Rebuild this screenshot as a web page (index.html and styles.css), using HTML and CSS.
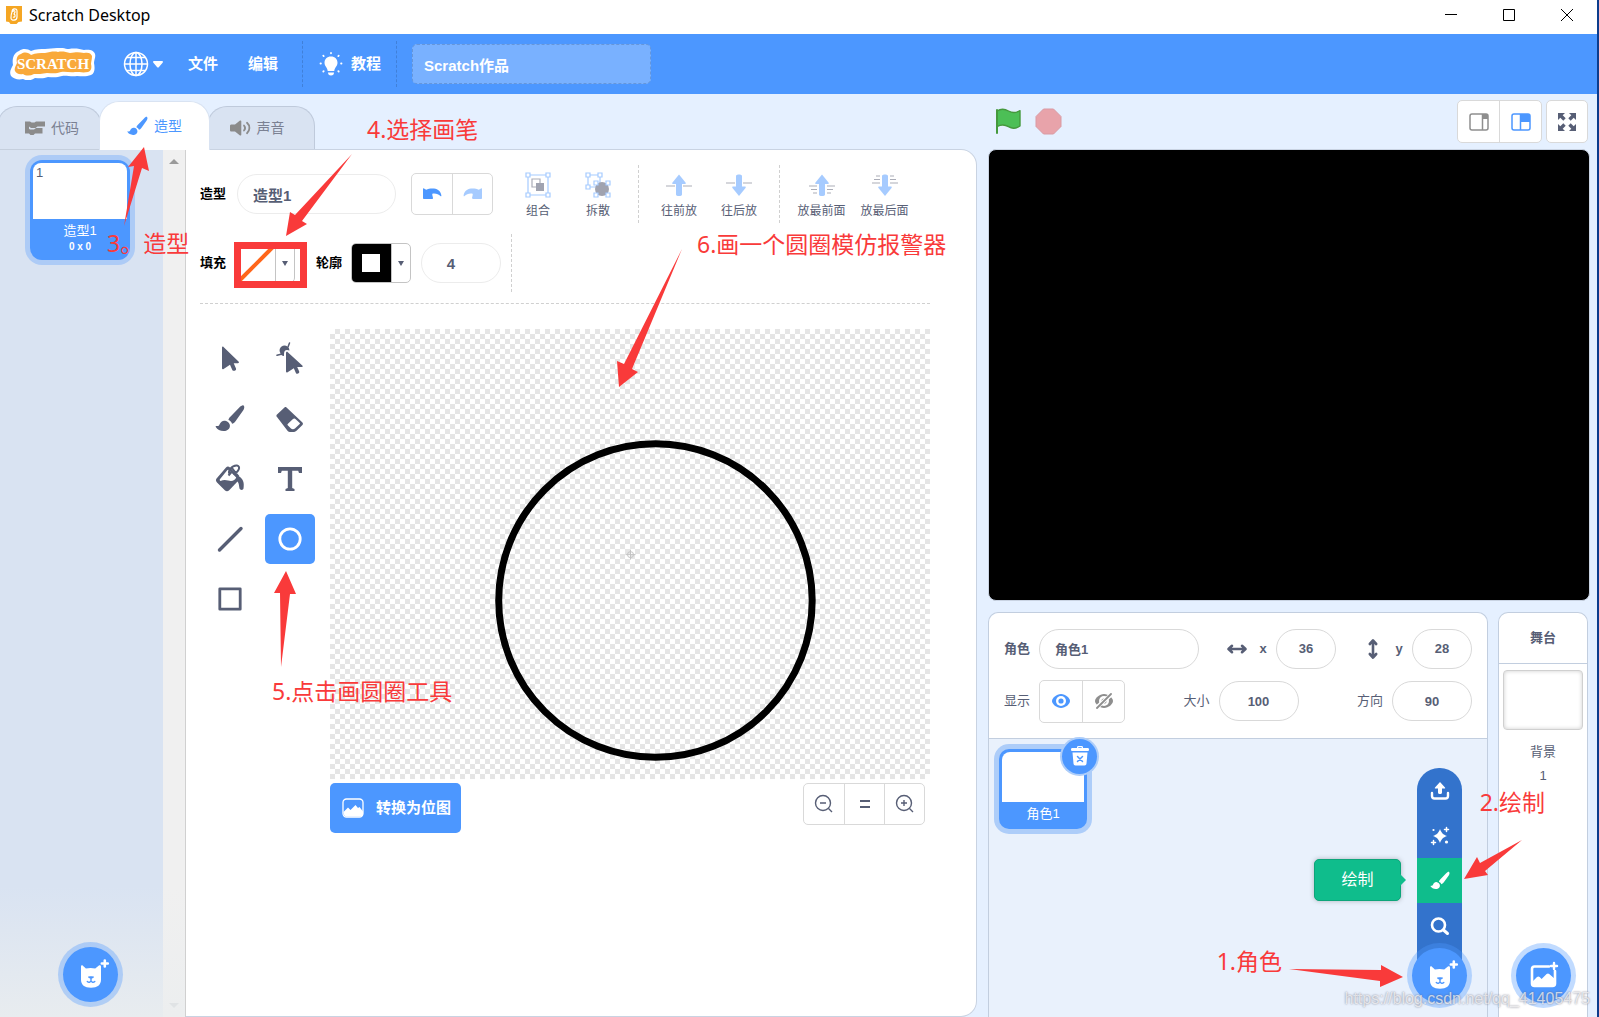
FILE: index.html
```html
<!DOCTYPE html>
<html lang="zh-CN">
<head>
<meta charset="utf-8">
<title>Scratch Desktop</title>
<link rel="stylesheet" href="styles.css">
</head>
<body>
<svg class="sprites" aria-hidden="true">
  <symbol id="brush" viewBox="0 0 30 30">
    <path d="M28.600 1.400c1.200 1 .7 3.200-.5 5.200L20.500 17.300c-1 1.400-2.300 2.200-3.400 2.500-.6-1.800-1.900-3.100-3.700-3.700.2-1.200.9-2.500 2.200-3.600L24.300 3.400c1.600-1.500 3.300-2.700 4.300-2z"/>
    <path d="M14.600 20.200c1.300 3.600-1.500 6.800-6 6.800-3.400 0-6.400-1.600-7.800-4-.4-.7.100-1.200.9-1 1.400.3 2.300-.1 2.800-1.400 1.200-3.200 3.500-4.300 5.800-3.800 2 .4 3.600 1.600 4.300 3.400z"/>
  </symbol>
  <symbol id="cat" viewBox="0 0 44 44">
    <path fill="#fff" d="M12 13.500c0-1.200 1.200-1.500 1.900-.8l3 2.900c3.200-.7 6.200-.7 9.300 0l3.700-3.100c.9-.7 2.100-.2 2.100 1v13.200c0 5-3.500 8-10 8s-10-3-10-8z"/>
    <path fill="#4c97ff" d="M19 23.800c0-.4 1.300-.6 3-.6s3 .2 3 .6c0 .8-1.600 2-3 2s-3-1.200-3-2z"/>
    <path fill="none" stroke="#4c97ff" stroke-width="1.400" stroke-linecap="round" d="M22 25.500v2.500M18.300 28.500c1.500 1.300 3 .8 3.700-.5.7 1.300 2.300 1.800 3.800.5"/>
    <path stroke="#fff" stroke-width="2.600" stroke-linecap="round" d="M35.800 7.500v6M32.800 10.500h6"/>
  </symbol>
</svg>

<div class="app">
  <header class="titlebar">
    <svg class="app-icon" width="18" height="19" viewBox="0 0 18 19"><path fill="#f5a623" d="M1 0h16v15.500l-3.500.5L11.500 18h-6L4 16l-3-.5z"/><path fill="none" stroke="#fff" stroke-width="1.200" d="M7 6c0-4 5-4 5-1v6c0 4-6 4-6 1 0-2 0-4 1-6zM8 6c0-2 2-2 2 0l-1 2c2 1 1 4-1 3"/></svg>
    <h1 class="title">Scratch Desktop</h1>
    <div class="window-buttons">
      <button aria-label="最小化"><svg width="12" height="12"><path d="M0 5.500h12"/></svg></button>
      <button aria-label="最大化"><svg width="12" height="12"><path d="M.5.5h11v11H.5z"/></svg></button>
      <button aria-label="关闭"><svg width="12" height="12"><path d="M0 0l12 12M12 0L0 12"/></svg></button>
    </div>
  </header>

  <nav class="menubar">
    <svg class="logo" width="86" height="32" viewBox="0 0 86 32" role="img">
      <path fill="#fff" d="M9 3c4-3 9-2 12 0 5-2 10-2 14-2s8-1 12-1c5-1 8 1 12 1 6-1 11 0 15 1 5-1 10 0 11 4 1 3-1 6-1 9 1 5 1 10-3 12-5 2-10 1-14 1-6 1-11-1-15 0-6 2-10 1-14 1-5 2-9 1-13 1-5 3-8 3-12 1-5 1-9 0-12-3-2-4 0-7 2-11C2 12 3 5 9 3z"/>
      <path fill="#f9a93a" d="M11 6c4-3 8-1 10 1 5-2 9-2 14-2 5-1 9-2 13-1 4-1 8 0 12 1 6-1 9-1 14 0 4-1 7 0 8 3 0 3-1 6-1 8 1 4 0 7-3 8-5 1-8 0-13 0-5 1-9-1-14 0-5 2-9 1-14 1-5 1-9 1-13 1-4 2-8 2-11 0-4 1-7-1-8-3-1-3 1-5 2-8C6 11 7 7 11 6z"/>
      <text x="43" y="21" text-anchor="middle" class="logo-text">SCRATCH</text>
    </svg>
    <button class="language" aria-label="语言">
      <svg width="26" height="26" viewBox="0 0 26 26" fill="none" stroke="#fff" stroke-width="1.500"><circle cx="13" cy="13" r="11.500"/><ellipse cx="13" cy="13" rx="6" ry="11.500"/><path d="M13 1v24M1 13h24M3.500 6.500h19M3.500 19.500h19"/></svg>
      <svg width="10" height="7" viewBox="0 0 10 7"><path fill="#fff" d="M1 0h8c1 0 1.300 1 .6 1.700L6 6c-.6.700-1.400.7-2 0L.4 1.700C-.3 1 0 0 1 0z"/></svg>
    </button>
    <button class="menu">文件</button>
    <button class="menu">编辑</button>
    <button class="tutorials">
      <svg width="24" height="24" viewBox="0 0 24 24"><path fill="#fff" d="M12 4.500c4 0 6.500 2.700 6.500 6.200 0 3.600-2.900 4.600-3.200 8.300H8.700c-.3-3.700-3.200-4.700-3.200-8.300 0-3.500 2.500-6.200 6.500-6.200zM9 20.500h6c0 2-1 3-3 3s-3-1-3-3z"/><path stroke="#fff" stroke-width="1.800" stroke-linecap="round" d="M12 .9v.4M4.300 3.700l.4.400M19.700 3.700l-.4.400M1.500 11.500h.4M22.100 11.500h.4M4.300 19.500l.4-.4M19.700 19.500l-.4-.4"/></svg>
      教程
    </button>
    <input class="project-title" aria-label="作品名称" value="Scratch作品">
  </nav>

  <main class="workspace">
    <section class="editor">
      <div class="tabs" role="tablist">
        <button class="tab tab-code" role="tab"><svg width="21" height="16" viewBox="0 0 21 16"><path d="M1 1.500h5l1.500 1h3l1.500-1h9v5h-7.500l-2 1.500H7L5 6.500H1z"/><path d="M1 8h3l2 1.500h4L12 8h6.500v5.500H11L9.500 15h-3L5 13.500H1z"/><path d="M1 6h4v3H1z"/></svg>代码</button>
        <button class="tab tab-costume active" role="tab"><svg width="21" height="21"><use href="#brush"/></svg>造型</button>
        <button class="tab tab-sound" role="tab"><svg width="21" height="16" viewBox="0 0 21 16"><path d="M1.500 4.500H5L10 .6c.7-.4 1.300-.1 1.300.6v13.600c0 .700-.6 1-1.300.6L5 11.500H1.500C.6 11.500 0 11 0 10V6c0-1 .6-1.500 1.500-1.500z"/><path fill="none" stroke="#8b8b8b" stroke-width="1.800" stroke-linecap="round" d="M14 5.500c1.300 1.500 1.300 3.500 0 5M17 2.800c3.200 2.800 3.200 7.600 0 10.400"/></svg>声音</button>
      </div>
      <div class="editor-body">
        <aside class="costumes">
          <div class="costume-list">
            <div class="costume">
              <div class="costume-image">1</div>
              <div class="costume-name">造型1</div>
              <div class="costume-size">0 x 0</div>
            </div>
          </div>
          <div class="scrollbar"><i class="up"></i><i class="down"></i></div>
          <button class="round-add costume-add" aria-label="选择一个造型"><svg width="44" height="44"><use href="#cat"/></svg></button>
        </aside>

        <div class="paint">
          <div class="paint-row">
            <label class="paint-label" for="costume-name">造型</label>
            <input id="costume-name" class="pill costume-input" value="造型1">
            <div class="history">
              <button aria-label="撤销"><svg width="20" height="20" viewBox="0 0 20 20"><path fill="#4c97ff" d="M1 5c0-.7.5-.9 1-.5l2.200 1.300C6 4.800 9 4.400 12 4.600c4.200.4 7 3.300 7.400 7.100 0 .6-.6.8-1 .3-1.800-2-4.400-2.900-7.700-2.500l-.5.900.8 3.700c.1.500-.2.900-.7.900H1.800c-.5 0-.8-.3-.8-.8z"/></svg></button>
              <button aria-label="重做"><svg width="20" height="20" viewBox="0 0 20 20"><path fill="#a6cbff" transform="matrix(-1 0 0 1 20 0)" d="M1 5c0-.7.5-.9 1-.5l2.200 1.300C6 4.800 9 4.400 12 4.600c4.200.4 7 3.300 7.400 7.100 0 .6-.6.8-1 .3-1.800-2-4.400-2.900-7.700-2.500l-.5.900.8 3.700c.1.500-.2.900-.7.900H1.800c-.5 0-.8-.3-.8-.8z"/></svg></button>
            </div>
            <div class="actions">
              <button class="action"><svg width="26" height="26" viewBox="0 0 26 26"><path fill="none" stroke="#a6cbff" stroke-width="1.200" d="M3 3h20v20H3z"/><path fill="#fff" stroke="#a6cbff" stroke-width="1.200" d="M1 1h4v4H1zM21 1h4v4h-4zM1 21h4v4H1zM21 21h4v4h-4z"/><path fill="#fff" stroke="#abadb8" stroke-width="1.200" d="M7 7h8v8H7z"/><path fill="#a0a3b0" d="M11 11h8v8h-8z"/></svg>组合</button>
              <button class="action"><svg width="26" height="26" viewBox="0 0 26 26"><path fill="none" stroke="#a6cbff" stroke-width="1.200" d="M3 3h12v12H3z"/><path fill="#fff" stroke="#a6cbff" stroke-width="1.200" d="M1 1h4v4H1zM13 1h4v4h-4zM1 13h4v4H1z"/><path fill="#a0a3b0" d="M11 11h12v12H11z"/><circle cx="17" cy="17" r="7" fill="#a0a3b0"/><path fill="#fff" stroke="#a6cbff" stroke-width="1.200" d="M9 9h4v4H9zM21 9h4v4h-4zM9 21h4v4H9zM21 21h4v4h-4z"/></svg>拆散</button>
            </div>
            <div class="actions divided">
              <button class="action"><svg width="26" height="26" viewBox="0 0 26 26"><path fill="#a6cbff" d="M13 2.500l6.500 8c.6.800.2 1.500-.7 1.500H16v10.500c0 2-6 2-6 0V12H7.200c-.9 0-1.300-.7-.7-1.500z"/><path stroke="#abadb8" stroke-width="1.200" d="M0 14h9M17 14h9"/></svg>往前放</button>
              <button class="action"><svg width="26" height="26" viewBox="0 0 26 26"><path fill="#a6cbff" d="M13 24l6.500-8c.6-.8.2-1.500-.7-1.500H16V4c0-2-6-2-6 0v10.500H7.200c-.9 0-1.300.7-.7 1.500z"/><path stroke="#abadb8" stroke-width="1.200" d="M0 11h9M17 11h9"/></svg>往后放</button>
            </div>
            <div class="actions divided wide">
              <button class="action"><svg width="26" height="26" viewBox="0 0 26 26"><path fill="#a6cbff" d="M13 2.500l6.500 8c.6.800.2 1.500-.7 1.500H16v10.500c0 2-6 2-6 0V12H7.200c-.9 0-1.300-.7-.7-1.500z"/><path stroke="#abadb8" stroke-width="1.200" d="M0 14h8M18 14h8M2 17.500h6M18 17.500h6M4 21h4M18 21h4"/></svg>放最前面</button>
              <button class="action"><svg width="26" height="26" viewBox="0 0 26 26"><path fill="#a6cbff" d="M13 24l6.500-8c.6-.8.2-1.500-.7-1.500H16V4c0-2-6-2-6 0v10.500H7.200c-.9 0-1.300.7-.7 1.500z"/><path stroke="#abadb8" stroke-width="1.200" d="M0 11h8M18 11h8M2 7.500h6M18 7.500h6M4 4h4M18 4h4"/></svg>放最后面</button>
            </div>
          </div>
          <div class="paint-row paint-row-colors">
            <span class="paint-label">填充</span>
            <button class="swatch fill-swatch" aria-label="填充"><svg width="39" height="38"><path stroke="#ff661a" stroke-width="4" d="M4 36L38 2"/></svg><i class="caret"></i></button>
            <span class="paint-label">轮廓</span>
            <button class="swatch outline-swatch" aria-label="轮廓"><b class="outline-color"></b><i class="caret"></i></button>
            <input class="pill stroke-width" aria-label="轮廓宽度" value="4">
            <span class="row-divider"></span>
          </div>

          <div class="paint-main">
            <div class="tools">
              <button aria-label="选择"><svg width="30" height="30" viewBox="0 0 30 30"><path d="M7 3.500c0-.9.900-1.200 1.500-.6l15 14.600c.8.800.4 1.700-.6 1.700h-4.200l2.300 5.200c.8 2-2.800 3.500-3.700 1.500L15 20.700 8.600 25c-.8.500-1.600.2-1.600-.8z"/></svg></button>
              <button aria-label="变形"><svg width="30" height="30" viewBox="0 0 30 30"><path d="M11 9c0-1 1-1.500 1.800-.8L27.300 21.500c.7.700.4 1.600-.6 1.600h-4.500l2 4.400c.8 1.800-2.500 3.200-3.300 1.400l-2.100-4.700-6.200 4c-.8.500-1.600.1-1.600-.8z"/><path d="M5.500 9.500a5 5 0 1 1 9-3L12 6c-2 0-3 1.500-3 4v2c-2 0-3-1-3.500-2.500z"/><path fill="none" stroke="#575e75" stroke-width="1.500" stroke-linecap="round" d="M2 11.200l5-1.200M13 3l1.500-4"/></svg></button>
              <button aria-label="画笔"><svg width="30" height="30"><use href="#brush"/></svg></button>
              <button aria-label="橡皮擦"><svg width="30" height="30" viewBox="0 0 30 30"><path d="M2 10.500l7.500-7c.6-.6 1.400-.6 2 0l15.700 14.800c1 1 1 2 0 3l-5.700 5.500c-.9.900-2.200 1.200-3.500 1.200h-3c-.9 0-1.700-.4-2.300-1L2 13c-.8-.8-.8-1.700 0-2.500z"/><path fill="#fff" d="M12.700 21.300c-.3-.4-.4-.8 0-1.200l5-4.800c.9-.8 2-1 3-.1l4 3.700c.4.400.4.700 0 1.100l-4.500 4.300c-1.500 1.400-3.300 1.200-4.500 0z"/></svg></button>
              <button aria-label="填充工具"><svg width="30" height="30" viewBox="0 0 30 30"><path d="M11 3.500c1.200-1.400 2.700-1.300 4 0l8.500 8.600c4.500 2.500 6 6.500 5 12.400-.3 2-3.500 1.700-4 0-.5-2.500-.4-5-2-7l-8.300 8.700c-1.400 1.300-3 1.300-4.400 0L2 18.500c-1.400-1.400-1.400-3 0-4.400z"/><path fill="#fff" d="M12 6.500c.8-.9 1.500-.9 2.200 0l7 7c-1.200 3.200-4.400 4-8 3-2.500-.7-5-.9-7.700.5-1-.7-1-1.500-.2-2.300z"/><path fill="none" stroke="#575e75" stroke-width="2" d="M15 10.500c-3-3 2-9.500 7-9 4 .7 2 6.500-3.500 8.500M17 4l6.500 8.500M13.500 11.500l3-3.500"/></svg></button>
              <button aria-label="文本"><svg width="30" height="30" viewBox="0 0 30 30"><path d="M3 3h24v6h-3l-.8-2.200H17.200V24l2.300 1v2h-9v-2l2.300-1V6.800H6.800L6 9H3z"/></svg></button>
              <button aria-label="线段"><svg width="30" height="30" viewBox="0 0 30 30"><path stroke="#575e75" stroke-width="3.400" stroke-linecap="round" d="M4.500 26L26 4.500"/></svg></button>
              <button class="selected" aria-label="圆"><svg width="30" height="30" viewBox="0 0 30 30"><circle cx="15" cy="15" r="10.200" fill="none" stroke="#fff" stroke-width="2.800"/></svg></button>
              <button aria-label="矩形"><svg width="30" height="30" viewBox="0 0 30 30"><path fill="none" stroke="#575e75" stroke-width="2.800" stroke-linejoin="round" d="M4.800 4.800h20.400v20.400h-20.400z"/></svg></button>
            </div>
            <div class="canvas-column">
              <svg class="canvas" viewBox="0 0 601 451" aria-label="画布">
                <circle cx="326" cy="272" r="157" fill="none" stroke="#000" stroke-width="7"/>
                <g fill="none" stroke="#c4c4c4"><circle cx="301" cy="226" r="3"/><path d="M296 226h10M301 221v10"/></g>
              </svg>
              <div class="canvas-controls">
                <button class="convert"><svg width="22" height="20" viewBox="0 0 22 20"><rect x="1" y="1" width="20" height="18" rx="3.500" fill="none" stroke="#fff" stroke-width="1.300"/><path fill="#fff" d="M1.500 14l4.500-4.500 2.500 2.500L13.500 7l2.500 3 1.500-1 3.500 4.500v3c0 1-1 2-2.500 2h-14c-1.500 0-2.500-1-2.500-2z"/></svg>转换为位图</button>
                <div class="zoom">
                  <button aria-label="缩小"><svg width="20" height="20" viewBox="0 0 20 20"><circle cx="9" cy="9" r="7.500"/><path d="M14.500 14.500l3.500 3.500M6 9h6"/></svg></button>
                  <button aria-label="重置缩放"><svg width="20" height="20" viewBox="0 0 20 20"><path class="thick" d="M5 7h10M5 13h10"/></svg></button>
                  <button aria-label="放大"><svg width="20" height="20" viewBox="0 0 20 20"><circle cx="9" cy="9" r="7.500"/><path d="M14.500 14.500l3.500 3.500M6 9h6M9 6v6"/></svg></button>
                </div>
              </div>
            </div>
          </div>
        </div>
      </div>
    </section>

    <section class="side">
      <div class="stage-header">
        <button class="bare" aria-label="运行"><svg width="27" height="27" viewBox="0 0 27 27"><path fill="#4cbf56" stroke="#45993d" stroke-width="1.400" stroke-linejoin="round" d="M2 3c4-2.500 8-2 11.500 0s7.500 2 11.500-.3V18c-4 2.800-8 2.800-11.500.7S6 16.500 2 18.500z"/><path stroke="#45993d" stroke-width="2" stroke-linecap="round" d="M2 2v23"/></svg></button>
        <button class="bare" aria-label="停止"><svg width="27" height="27" viewBox="0 0 27 27"><path fill="#e8a3aa" stroke="#d99aa3" d="M8.500 1h10l7.500 7.500v10L18.500 26h-10L1 18.500v-10z"/></svg></button>
        <div class="stage-sizes">
          <button aria-label="小舞台"><svg width="20" height="18" viewBox="0 0 20 18"><rect x="1" y="1" width="18" height="16" rx="2" fill="none" stroke="#8e8e8e" stroke-width="1.500"/><path stroke="#8e8e8e" stroke-width="1.500" d="M13.500 1v16"/><path fill="#8e8e8e" d="M13 1h6v5h-6z"/></svg></button>
          <button aria-label="大舞台"><svg width="20" height="18" viewBox="0 0 20 18"><rect x="1" y="1" width="18" height="16" rx="2" fill="none" stroke="#4c97ff" stroke-width="1.500"/><path stroke="#4c97ff" stroke-width="1.500" d="M9.500 1v16"/><path fill="#4c97ff" d="M9 1h10v8H9z"/></svg></button>
        </div>
        <button class="fullscreen" aria-label="全屏"><svg width="20" height="20" viewBox="0 0 20 20"><path fill="#575e75" d="M1 1h7L5.700 3.300l3 3-2.400 2.400-3-3L1 8zM19 1v7l-2.300-2.300-3 3-2.400-2.400 3-3L12 1zM1 19v-7l2.300 2.300 3-3 2.400 2.400-3 3L8 19zM19 19h-7l2.300-2.300-3-3 2.400-2.400 3 3L19 12z"/></svg></button>
      </div>
      <div class="stage"></div>
      <div class="targets">
        <section class="sprite-panel">
          <div class="sprite-info">
            <div class="info-row">
              <label class="strong" for="sprite-name">角色</label><input id="sprite-name" class="pill sprite-name" value="角色1">
              <svg class="axis" width="22" height="22" viewBox="0 0 22 22"><path fill="none" stroke="#575e75" stroke-width="2.600" stroke-linecap="round" stroke-linejoin="round" d="M3 11h16M6 7.800L2.500 11 6 14.200M16 7.800l3.500 3.200-3.500 3.200"/></svg>
              <label class="strong" for="sprite-x">x</label><input id="sprite-x" class="pill small" value="36">
              <svg class="axis axis-y" width="22" height="22" viewBox="0 0 22 22"><path fill="none" stroke="#575e75" stroke-width="2.600" stroke-linecap="round" stroke-linejoin="round" d="M11 3v16M7.800 6L11 2.500 14.200 6M7.800 16l3.200 3.500 3.200-3.500"/></svg>
              <label class="strong" for="sprite-y">y</label><input id="sprite-y" class="pill small" value="28">
            </div>
            <div class="info-row">
              <span>显示</span>
              <div class="visibility">
                <button aria-label="显示"><svg width="20" height="16" viewBox="0 0 20 16"><path fill="#4c97ff" d="M10 1c4.500 0 9 4 9 7s-4.500 7-9 7-9-4-9-7 4.500-7 9-7z"/><circle cx="10" cy="8" r="5" fill="#fff"/><circle cx="10" cy="8" r="2.600" fill="#4c97ff"/></svg></button>
                <button aria-label="隐藏"><svg width="20" height="16" viewBox="0 0 20 16"><path fill="#8e8e8e" d="M10 1c4.500 0 9 4 9 7s-4.500 7-9 7-9-4-9-7 4.500-7 9-7z"/><circle cx="10" cy="8" r="5" fill="#fff"/><circle cx="10" cy="8" r="2.600" fill="#8e8e8e"/><path stroke="#fff" stroke-width="4" d="M2 15L18 1"/><path stroke="#8e8e8e" stroke-width="1.800" stroke-linecap="round" d="M3 15L17 1"/></svg></button>
              </div>
              <label class="push" for="sprite-size">大小</label><input id="sprite-size" class="pill medium" value="100">
              <label class="push" for="sprite-dir">方向</label><input id="sprite-dir" class="pill medium" value="90">
            </div>
          </div>
          <div class="sprite-list">
            <div class="sprite">
              <div class="sprite-image"></div>
              <div class="sprite-label">角色1</div>
              <button class="delete" aria-label="删除"><svg width="20" height="22" viewBox="0 0 20 22"><path fill="#fff" d="M7 2.500C7 1.500 7.500 1 8.500 1h3c1 0 1.500.5 1.500 1.500V3h4.500C18.500 3 19 3.500 19 4.500S18.500 6 17.500 6h-15C1.500 6 1 5.500 1 4.500S1.500 3 2.500 3H7zM2.500 7.500h15l-1 11c-.1 1.200-.8 2-2 2h-9c-1.200 0-1.900-.8-2-2z"/><path fill="#4c97ff" d="M8.300 2.200h3.400V3H8.300z"/><path stroke="#4c97ff" stroke-width="1.500" stroke-linecap="round" d="M7.500 11.500l5 5M12.500 11.500l-5 5"/></svg></button>
            </div>
          </div>
          <div class="sprite-add">
            <div class="add-menu">
              <button aria-label="上传角色"><svg width="20" height="20" viewBox="0 0 20 20"><path fill="#fff" d="M10 1l5 5.500c.4.600.2 1-.5 1H12v4c0 2-4 2-4 0v-4H5.500c-.7 0-.9-.4-.5-1z"/><path fill="none" stroke="#fff" stroke-width="2.400" stroke-linecap="round" d="M2 12v3c0 1.500 1 2.500 2.500 2.500h11c1.500 0 2.500-1 2.500-2.500v-3"/></svg></button>
              <button aria-label="随机"><svg width="20" height="20" viewBox="0 0 20 20"><path fill="#fff" d="M10 3c1.500 4 3 5.500 7 7-4 1.500-5.500 3-7 7-1.500-4-3-5.500-7-7 4-1.500 5.500-3 7-7z"/><path stroke="#fff" stroke-width="1.500" stroke-linecap="round" d="M16.500 1.500v4M14.500 3.500h4M3.500 14.500v4M1.500 16.500h4"/><circle cx="3.500" cy="4" r="1.100" fill="#fff"/><circle cx="16.500" cy="16" r="1.600" fill="#fff"/></svg></button>
              <button class="current" aria-label="绘制"><svg width="20" height="20"><use href="#brush"/></svg></button>
              <button aria-label="选择一个角色"><svg width="20" height="20" viewBox="0 0 20 20"><circle cx="8.500" cy="9" r="6.500" fill="none" stroke="#fff" stroke-width="2.600"/><path stroke="#fff" stroke-width="3" stroke-linecap="round" d="M13.500 14l4 3.500"/></svg></button>
              <span class="tooltip" role="tooltip">绘制</span>
            </div>
            <button class="round-add" aria-label="添加角色"><svg width="44" height="44"><use href="#cat"/></svg></button>
          </div>
        </section>
        <section class="stage-panel">
          <h2 class="stage-title">舞台</h2>
          <div class="backdrop"></div>
          <div class="backdrop-label">背景</div>
          <div class="backdrop-count">1</div>
          <button class="round-add backdrop-add" aria-label="选择一个背景"><svg width="44" height="44" viewBox="0 0 44 44"><path fill="none" stroke="#fff" stroke-width="2.600" stroke-linecap="round" d="M28 12.500H13.500c-1.500 0-2.500 1-2.500 2.500v14.500c0 1.500 1 2.500 2.500 2.500h18c1.500 0 2.500-1 2.500-2.500V17"/><path fill="#fff" d="M11 28l5-5c1-.8 1.800-.8 2.600 0l2 2 5-5c1-.8 1.800-.8 2.600 0l5.800 5v5c0 1.500-1 2.500-2.500 2.500h-18c-1.500 0-2.500-1-2.500-2.500z"/><path stroke="#fff" stroke-width="2.400" stroke-linecap="round" d="M33 9v6M30 12h6"/></svg></button>
        </section>
      </div>
    </section>
  </main>

  <div class="notes">
    <svg class="arrows arrows-left" width="700" height="700" viewBox="0 0 700 700">
      <path d="M144 147L149 171 142 168 124 226 134 166 128 167z"/>
      <path d="M286 236L290 212 295 215 352 154 302 221 307 224z"/>
      <path d="M286 571L296 594 290 594 281 667 280 593 274 593z"/>
      <path d="M619 387L617 361 624 364 682 249 632 369 638 372z"/>
      <path fill-rule="evenodd" d="M234 242h73v46h-73zM241 249v32h59v-32z"/>
    </svg>
    <svg class="arrows arrows-right" width="400" height="200" viewBox="1199 817 400 200">
      <path d="M1403 977L1380 987 1380 981 1289 969 1381 970 1381 965z"/>
      <path d="M1464 879L1477 857 1480 863 1522 840 1485 871 1488 875z"/>
    </svg>
    <p class="note n1">1.角色</p>
    <p class="note n2">2.绘制</p>
    <p class="note n3">3。造型</p>
    <p class="note n4">4.选择画笔</p>
    <p class="note n5">5.点击画圆圈工具</p>
    <p class="note n6">6.画一个圆圈模仿报警器</p>
    <p class="watermark">https://blog.csdn.net/qq_41405475</p>
  </div>
</div>
</body>
</html>
```

FILE: styles.css
```css
* { box-sizing: border-box; }

body {
  margin: 0;
  background: #0c3c8c;
  color: #575e75;
  font: 13px/20px "Liberation Sans", "Noto Sans CJK SC", sans-serif;
}

button, input {
  margin: 0;
  padding: 0;
  border: 0;
  background: none;
  color: inherit;
  font: inherit;
}

h1, h2, p { margin: 0; }
svg { display: block; flex: none; }
.sprites { position: absolute; width: 0; height: 0; }

.app {
  position: relative;
  display: flex;
  flex-direction: column;
  height: 100vh;
  margin-right: 2px;
  overflow: hidden;
  background: #e5f0ff;
}

/* Window title bar */
.titlebar {
  display: flex;
  align-items: center;
  flex: none;
  height: 34px;
  padding: 0 1px 4px 5px;
  background: #fff;
  color: #000;
}
.title {
  margin-left: 6px;
  font: 16px/20px "Noto Sans", sans-serif;
}
.window-buttons { display: flex; margin-left: auto; }
.window-buttons button {
  display: grid;
  place-items: center;
  width: 58px;
  height: 30px;
}
.window-buttons path { fill: none; stroke: #000; }

/* Menu bar */
.menubar {
  display: flex;
  align-items: center;
  flex: none;
  height: 60px;
  padding-left: 10px;
  background: #4c97ff;
  color: #fff;
  font-size: 15px;
  font-weight: bold;
}
.logo-text {
  fill: #fff;
  font: bold 15px "Liberation Serif", serif;
}
.language {
  display: flex;
  align-items: center;
  gap: 4px;
  margin: 0 10px 0 27px;
}
.menu { width: 60px; height: 60px; }
.tutorials {
  display: flex;
  align-items: center;
  gap: 8px;
  height: 46px;
  margin: 0 15px 0 9px;
  padding: 0 15px 0 16px;
  border: dashed rgba(0, 0, 0, .15);
  border-width: 0 1px;
}
.project-title {
  width: 239px;
  height: 40px;
  padding: 0 11px;
  border: 1px dashed rgba(0, 0, 0, .15);
  border-radius: 5px;
  background: rgba(255, 255, 255, .25);
}

/* Main columns */
.workspace {
  display: flex;
  flex: 1;
  gap: 11px;
  min-height: 0;
  padding-right: 7px;
}
.editor {
  display: flex;
  flex: 1;
  flex-direction: column;
  min-width: 0;
}

.tabs {
  display: flex;
  align-items: flex-end;
  flex: none;
  height: 55px;
}
.tab {
  display: flex;
  align-items: center;
  justify-content: center;
  gap: 6px;
  width: 108px;
  height: 43px;
  margin-left: -3px;
  border: 1px solid #bfcadb;
  border-bottom: 0;
  border-radius: 20px 20px 0 0;
  background: #d9e3f2;
  color: #7b8193;
  font-size: 14px;
  fill: #8b8b8b;
}
.tab-code { justify-content: flex-start; width: 105px; padding-left: 26px; }
.tab-sound { padding-right: 8px; }
.tab.active {
  z-index: 1;
  width: 111px;
  height: 49px;
  margin-bottom: -1px;
  border-color: #d9e3f2;
  background: #fff;
  color: #4c97ff;
  fill: #4c97ff;
}

.editor-body { display: flex; flex: 1; min-height: 0; }
.costumes {
  position: relative;
  display: flex;
  flex: none;
  width: 186px;
  border-top: 1px solid #c5cfdd;
  border-right: 1px solid #d0d0d0;
  background: linear-gradient(#d9e3f2 0 85%, #e8ecef);
}
.costume-list { flex: 1; padding: 10px 0 0 30px; }
.costume {
  width: 100px;
  height: 100px;
  padding: 3px;
  border-radius: 12px;
  background: #4c97ff;
  box-shadow: 0 0 0 5px #adcbf6;
  color: #fff;
  text-align: center;
}
.costume-image {
  height: 56px;
  padding: 0 3px;
  border-radius: 8px 8px 0 0;
  background: #fff;
  color: #575e75;
  text-align: left;
}
.costume-name { padding-top: 4px; line-height: 16px; }
.costume-size { font-size: 10px; font-weight: bold; line-height: 16px; }
.scrollbar {
  display: flex;
  flex-direction: column;
  align-items: center;
  justify-content: space-between;
  width: 22px;
  padding: 9px 0;
  background: linear-gradient(#f0f0f0 0 85%, #eceeef);
}
.up { border: solid transparent; border-width: 0 5px 5px; border-bottom-color: #9a9a9a; }
.down { border: solid transparent; border-width: 5px 5px 0; border-top-color: #e0e3e5; }

.round-add {
  display: grid;
  place-items: center;
  width: 55px;
  height: 55px;
  border-radius: 50%;
  background: #4c97ff;
  box-shadow: 0 0 0 5px rgba(76, 151, 255, .35);
}
.costume-add { position: absolute; left: 63px; bottom: 15px; }

/* Paint editor */
.paint {
  flex: 1;
  min-width: 0;
  padding: 15px 46px 0 14px;
  border: 1px solid #c9d3e2;
  border-left: 0;
  border-radius: 0 16px 16px 0;
  background: #fff;
}
.paint-row { display: flex; align-items: center; height: 58px; }
.paint-row-colors {
  height: 81px;
  padding: 11px 0;
  border-bottom: 1px dashed #d0d0d0;
}
.paint-label {
  width: 27px;
  margin-right: 10px;
  color: #000;
  font-weight: bold;
}
.paint-row-colors .paint-label { margin-right: 8px; }
.pill {
  height: 40px;
  border: 1px solid #d9d9d9;
  border-radius: 20px;
  background: #fff;
  font-weight: bold;
  text-align: center;
}
.paint .pill { border-color: #ececec; font-size: 15px; }
.paint .costume-input { width: 159px; padding: 0 15px; text-align: left; }
.history, .zoom, .visibility, .stage-sizes {
  display: flex;
  border: 1px solid #d9d9d9;
  border-radius: 5px;
  background: #fff;
}
.history button, .zoom button, .visibility button, .stage-sizes button {
  display: grid;
  place-items: center;
  width: 40px;
  height: 40px;
}
.history button + button, .zoom button + button,
.visibility button + button, .stage-sizes button + button { border-left: 1px solid #d9d9d9; }
.history { margin: 0 15px; }

.actions { display: flex; height: 58px; }
.divided {
  margin-left: 10px;
  padding-left: 10px;
  border-left: 1px dashed #d0d0d0;
}
.action {
  display: flex;
  flex-direction: column;
  align-items: center;
  gap: 3px;
  width: 60px;
  padding-top: 7px;
  font-size: 12px;
  white-space: nowrap;
}
.wide .action { width: 63px; }

.swatch {
  display: flex;
  align-items: center;
  width: 60px;
  height: 40px;
  border: 1px solid #c4c4c4;
  border-radius: 5px;
  overflow: hidden;
}
.fill-swatch { margin-right: 21px; }
.outline-swatch { margin-right: 10px; }
.outline-color {
  width: 40px;
  height: 40px;
  margin-left: -1px;
  border: 11px solid #000;
  background: #fff;
}
.caret {
  display: grid;
  place-items: center;
  flex: 1;
  height: 40px;
  border-left: 1px solid #c4c4c4;
}
.caret::after {
  border: solid transparent;
  border-width: 5px 3px 0;
  border-top-color: #575e75;
  content: "";
}
.paint .stroke-width { width: 80px; padding-right: 20px; }
.row-divider {
  height: 58px;
  margin-left: 10px;
  border-left: 1px dashed #d0d0d0;
}

.paint-main { display: flex; gap: 15px; padding: 25px 0 0 5px; }
.tools {
  display: grid;
  grid-template-columns: 50px 50px;
  grid-auto-rows: 50px;
  gap: 10px;
  padding-top: 5px;
  fill: #575e75;
}
.tools button { display: grid; place-items: center; border-radius: 5px; }
.tools svg { overflow: visible; }
.tools .selected { background: #4c97ff; }
.canvas-column { flex: 1; min-width: 0; }
.canvas {
  width: 100%;
  border-radius: 4px 0 0 0;
  background: conic-gradient(#e5e5e5 25%, #fff 0 50%, #e5e5e5 0 75%, #fff 0) 0 0 / 10px 10px;
}
.canvas-controls {
  display: flex;
  align-items: flex-start;
  justify-content: space-between;
  padding: 4px 5px 0 0;
}
.convert {
  display: flex;
  align-items: center;
  gap: 12px;
  height: 50px;
  padding: 0 10px 0 12px;
  border-radius: 5px;
  background: #4c97ff;
  color: #fff;
  font-size: 15px;
  font-weight: bold;
}
.zoom path, .zoom circle { fill: none; stroke: #575e75; stroke-width: 1.4; }
.zoom .thick { stroke-width: 2; }

/* Stage */
.side {
  display: flex;
  flex: none;
  flex-direction: column;
  width: 602px;
}
.stage-header {
  display: flex;
  align-items: center;
  flex: none;
  height: 55px;
  padding: 0 2px 0 7px;
}
.bare { width: 27px; height: 27px; margin-right: 13px; }
.stage-sizes { margin: 0 4px 0 auto; }
.visibility button { width: 42px; height: 41px; }
.stage-sizes button { width: 41px; height: 41px; }
.stage-sizes button + button { width: 42px; }
.fullscreen {
  display: grid;
  place-items: center;
  width: 42px;
  height: 43px;
  border: 1px solid #d9d9d9;
  border-radius: 5px;
  background: #fff;
}
.stage {
  aspect-ratio: 4 / 3;
  flex: none;
  border: 1px solid #c9d3e2;
  border-radius: 8px;
  background: #000;
}

.targets { display: flex; flex: 1; gap: 10px; margin-top: 11px; padding-right: 2px; }
.sprite-panel, .stage-panel {
  position: relative;
  border: 1px solid #c2cedf;
  border-bottom: 0;
  border-radius: 10px 10px 0 0;
}
.sprite-panel { flex: 1; background: #e9f1fc; }
.sprite-info {
  display: flex;
  flex-direction: column;
  gap: 11px;
  height: 126px;
  padding: 16px 15px 0;
  border-bottom: 1px solid #c2cedf;
  border-radius: 10px 10px 0 0;
  background: #fff;
}
.info-row { display: flex; align-items: center; }
.strong { font-weight: bold; }
.info-row > :first-child { width: 26px; margin-right: 9px; }
.sprite-name { width: 160px; padding: 0 15px; text-align: left; }
.axis { margin-left: 27px; }
.axis-y { margin-left: auto; }
.axis + label { width: 10px; margin: 0 8px 0 10px; text-align: center; }
.small { width: 60px; }
.medium { width: 80px; }
.push { margin: 0 9px 0 auto; }

.sprite-list { padding: 10px; }
.sprite {
  position: relative;
  width: 88px;
  height: 80px;
  padding: 3px;
  border-radius: 10px;
  background: #4c97ff;
  box-shadow: 0 0 0 5px #adcdf9;
  color: #fff;
  text-align: center;
}
.sprite-image { height: 50px; border-radius: 8px 8px 0 0; background: #fff; }
.sprite-label { padding-top: 2px; }
.delete {
  position: absolute;
  top: -10px;
  right: -10px;
  display: grid;
  place-items: center;
  width: 35px;
  height: 35px;
  border-radius: 50%;
  background: #4c97ff;
  box-shadow: 0 0 0 2px #adcdf9;
}

.sprite-add {
  position: absolute;
  right: 20px;
  bottom: 14px;
  display: flex;
  flex-direction: column;
  align-items: center;
}
.add-menu {
  position: relative;
  height: 210px;
  margin-bottom: -30px;
  border-radius: 22px 22px 0 0;
  background: #3373cc;
}
.add-menu button {
  display: grid;
  place-items: center;
  width: 45px;
  height: 45px;
  fill: #fff;
}
.add-menu .current { background: #0fbd8c; }
.sprite-add .round-add { position: relative; }
.tooltip {
  position: absolute;
  top: 91px;
  right: 61px;
  width: 87px;
  border: 1px solid #0da57a;
  border-radius: 5px;
  background: #0fbd8c;
  box-shadow: 0 0 5px rgba(0, 0, 0, .25);
  color: #fff;
  font-size: 16px;
  line-height: 40px;
  text-align: center;
}
.tooltip::after {
  position: absolute;
  top: 14px;
  right: -6px;
  border: solid transparent;
  border-width: 6px 0 6px 6px;
  border-left-color: #0fbd8c;
  content: "";
}

.stage-panel {
  display: flex;
  flex: none;
  flex-direction: column;
  align-items: center;
  width: 90px;
  background: #fff;
}
.stage-title {
  width: 100%;
  border-bottom: 1px solid #c2cedf;
  font-size: 13px;
  line-height: 50px;
  text-align: center;
}
.backdrop {
  width: 80px;
  height: 60px;
  margin: 6px 0 12px;
  border: 1px solid #d0d0d0;
  border-radius: 4px;
  box-shadow: inset 0 0 4px rgba(0, 0, 0, .2);
}
.backdrop-count { padding-top: 4px; }
.backdrop-add { position: absolute; bottom: 14px; }

/* Tutorial notes drawn over the editor */
.notes { position: absolute; inset: 0; z-index: 2; pointer-events: none; }
.arrows { position: absolute; fill: #f93a3a; }
.arrows-left { top: 0; left: 0; }
.arrows-right { right: -2px; bottom: 0; }
.note {
  position: absolute;
  color: #f93a3a;
  font: 23px/30px "Noto Sans", "Noto Sans CJK SC", sans-serif;
  white-space: nowrap;
}
.n1 { right: 315px; bottom: 41px; }
.n2 { right: 52px; bottom: 200px; }
.n3 { top: 228px; left: 107px; }
.n4 { top: 114px; left: 367px; }
.n5 { top: 676px; left: 272px; }
.n6 { top: 229px; left: 697px; }
.watermark {
  position: absolute;
  right: 7px;
  bottom: 8px;
  color: rgba(255, 255, 255, .7);
  font-size: 16px;
  text-shadow: 0 0 2px rgba(90, 90, 110, .8);
}
```
